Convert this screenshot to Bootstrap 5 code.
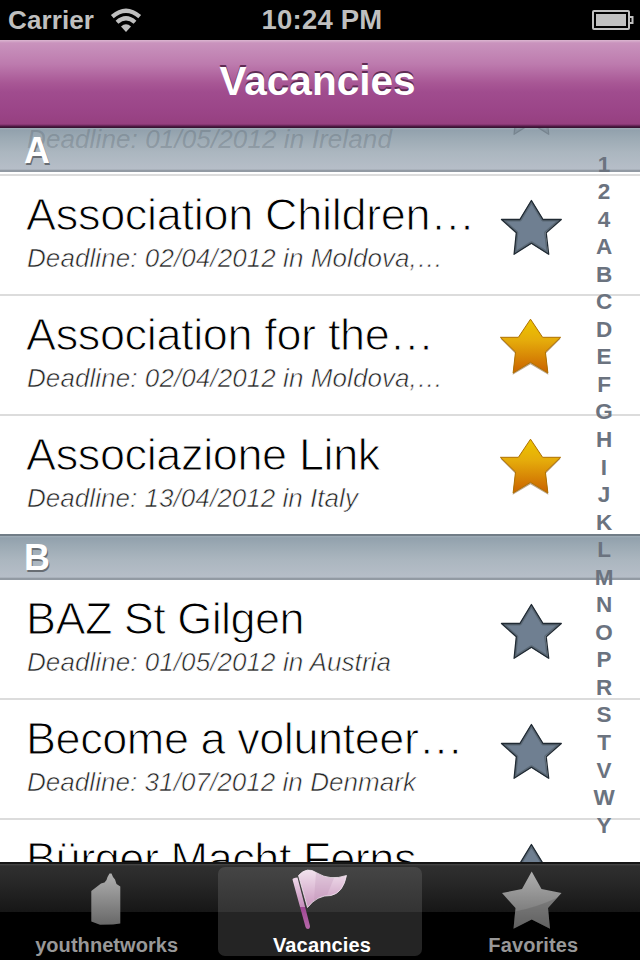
<!DOCTYPE html>
<html lang="en">
<head>
<meta charset="utf-8">
<meta name="viewport" content="width=device-width, initial-scale=1">
<title>Vacancies</title>
<link href="https://cdn.jsdelivr.net/npm/bootstrap@5.3.0/dist/css/bootstrap.min.css" rel="stylesheet">
<style>
body{font-family:"Liberation Sans",Arial,sans-serif;background:#fff}
.phone{width:640px;height:960px}
.status{height:40px;background:#000;color:#bfbfbf;font-size:26px;font-weight:700;line-height:40px}
.status .grow{flex:1 1 0}
.clock{font-size:27.5px}
.titlebar{height:88px;background:linear-gradient(#dbb6d0 0,#c993bd 3px,#bd7bae 24px,#a85795 43px,#a04c8e 52px,#9b4588 70px,#964080 84px,#7a2f68 85px,#3b1233 87px,#3b1233 88px);color:#fff;z-index:3}
.titlebar h1{font-size:40.5px;font-weight:700;line-height:44px;margin:0 5px 6px 0;text-shadow:0 -2px 0 #5f2c54}
.listing{height:734px;z-index:1}
.section-head{height:46px;padding-left:24px;color:#fff;font-size:36px;font-weight:700;line-height:46px;
 background:linear-gradient(#717d87 0,#717d87 1.5px,#a1afb9 2px,#92a1ad 4px,#9caab4 12px,#abb6bf 26px,#b6bec8 43px,#929aa3 44.5px,#929aa3 46px);text-shadow:1px 2px 0 #686d73}
.section-head>span{display:block;padding-top:1px}
.pinned{margin-top:-2px;margin-bottom:2px}
.pinned>span{padding-top:2px}
.ghost{left:27px;top:0;height:44px;color:rgba(75,86,96,.27);font-size:26px;line-height:26px;font-style:italic;text-shadow:none;font-weight:400}
.entry{height:120px;padding:14px 0 0 26px;border-bottom:2px solid #dcdcdc}
.entry.last{height:118px;border-bottom:0}
.rule{height:2px;background:#dcdcdc}
.star{width:66px;height:64px;left:498px;top:18px}
.star.ghost-star{top:-52px;opacity:.25}
.name{font-size:45px;line-height:50px;height:48px;color:#000;-webkit-text-stroke:1px #fff;overflow:hidden}
.when{font-size:26px;line-height:30px;margin:5px 0 0 1px;font-style:italic;color:#222;-webkit-text-stroke:.6px #fff}
.fit{white-space:nowrap}
.fit>span{display:inline-block}
.letters{right:16px;top:22.5px;width:40px;z-index:2;color:#6b737f;font-size:22.5px;font-weight:700;line-height:27.55px}
.tabs{height:98px;z-index:3;background:linear-gradient(#161616 0,#161616 2px,#484848 2px,#2f2f2f 4px,#282828 20px,#161616 50px,#000 50px,#000 98px);color:#989898;font-size:20px;font-weight:700}
.tab{flex:1 1 0;padding-top:5px}
.tab .face{height:89px;width:204px;border-radius:7px;line-height:22px}
.tab svg{display:block;width:80px;height:68px;flex:none;margin-bottom:-1px}
.tab.current{color:#fff}
.tab.current .face{background:linear-gradient(#454545 0,#333 45px,#242424 45px,#242424 100%)}
</style>
<script src="https://cdn.jsdelivr.net/npm/bootstrap@5.3.0/dist/js/bootstrap.bundle.min.js"></script>
</head>
<body>
<svg width="0" height="0" class="position-absolute">
 <defs>
  <linearGradient id="gold" x1="0" y1="0" x2="0" y2="1"><stop offset="0" stop-color="#edc500"/><stop offset=".4" stop-color="#e5ab0b"/><stop offset="1" stop-color="#ca6200"/></linearGradient>
  <linearGradient id="silver" x1="0" y1="0" x2="0" y2="1"><stop offset="0" stop-color="#b0b0b0"/><stop offset="1" stop-color="#686868"/></linearGradient>
  <linearGradient id="pink" x1="0" y1="0" x2="0" y2="1"><stop offset="0" stop-color="#f2e2ee"/><stop offset="1" stop-color="#c997be"/></linearGradient>
  <linearGradient id="pole" x1="0" y1="0" x2="0" y2="1"><stop offset="0" stop-color="#efd9ea"/><stop offset=".57" stop-color="#c68fbc"/><stop offset=".58" stop-color="#a14895"/><stop offset="1" stop-color="#b568a9"/></linearGradient>
  <clipPath id="star-edge"><path d="M33.400 6 45.400 25.600H62.700L47.300 38.500 50 60.300 33.400 49.800 16 60.300 18.300 38.500 4 25.600H21.600Z"/></clipPath>
  <symbol id="star-off" viewBox="0 0 66 64">
   <g fill="#6f7f91" stroke-linejoin="round"><path d="M33.400 6.500 45 25.500H63.300L48.200 38.800 50.700 60.300 33.400 49.300 16.100 60.300 18.300 38.800 3.500 25.500H21.900Z" stroke="#5a6875" stroke-width="4" clip-path="url(#star-edge)"/>
   <path d="M33.400 6.500 45 25.500H63.300L48.200 38.800 50.700 60.300 33.400 49.300 16.100 60.300 18.300 38.800 3.500 25.500H21.900Z" fill="none" stroke="#202a33" stroke-width="1.3"/></g>
  </symbol>
  <symbol id="star-on" viewBox="0 0 66 64">
   <path d="M32.500 6.300 44.600 24.600H62.800L47.700 39.400 50.300 60.700 32.500 50.200 14.700 60.700 17.300 39.400 2.200 24.600H20.400Z" fill="#a58763" opacity=".75"/>
   <path d="M32.500 5.200 44.600 23.300H62.600L47.400 38 49.900 59 32.500 48.300 15.100 59 17.500 38 2.400 23.300H20.400Z" fill="url(#gold)" stroke="#af7100" stroke-width="1" stroke-linejoin="round"/>
  </symbol>
 </defs>
</svg>
<div class="phone d-flex flex-column overflow-hidden position-relative">
 <header class="status d-flex align-items-center">
  <div class="grow d-flex align-items-center ps-2"><span class="fit" data-w="86"><span>Carrier</span></span>
   <svg class="ms-3" width="34" height="26" viewBox="0 0 34 26"><g fill="none" stroke="#bfbfbf" stroke-width="4.200"><path d="M2.300 9.700Q16 -2.300 29.700 9.700"/><path d="M7 15.300Q16 7.300 25 15.300"/></g><path d="M11 19.500Q16 15 21 19.500L16 25Z" fill="#bfbfbf"/></svg></div>
  <span class="clock fit" data-w="121"><span>10:24 PM</span></span>
  <div class="grow d-flex justify-content-end pe-1"><svg width="44" height="22" viewBox="0 0 44 22"><g fill="none" stroke="#c0c0c0" stroke-width="2"><rect x="1" y="2" width="36" height="18" rx="1"/><path d="M38 8H40.500V14H38"/></g><path d="M4 5H34V17H4Z" fill="#c0c0c0"/></svg></div>
 </header>
 <nav class="titlebar d-flex align-items-center justify-content-center position-relative"><h1 class="fit" data-w="196"><span>Vacancies</span></h1></nav>
 <main class="listing position-relative overflow-hidden">
  <div class="section-head pinned position-relative overflow-hidden"><div class="ghost position-absolute fit" data-w="365"><span>Deadline: 01/05/2012 in Ireland</span></div><svg class="star ghost-star position-absolute"><use href="#star-off"/></svg><span class="position-relative">A</span></div>
  <div class="rule"></div>
  <article class="entry position-relative"><div class="name fit" data-w="449"><span>Association Children…</span></div><div class="when fit" data-w="416"><span>Deadline: 02/04/2012 in Moldova,…</span></div><svg class="star position-absolute"><use href="#star-off"/></svg></article>
  <article class="entry position-relative"><div class="name fit" data-w="408"><span>Association for the…</span></div><div class="when fit" data-w="416"><span>Deadline: 02/04/2012 in Moldova,…</span></div><svg class="star position-absolute"><use href="#star-on"/></svg></article>
  <article class="entry position-relative last"><div class="name fit" data-w="354"><span>Associazione Link</span></div><div class="when fit" data-w="331"><span>Deadline: 13/04/2012 in Italy</span></div><svg class="star position-absolute"><use href="#star-on"/></svg></article>
  <div class="section-head"><span>B</span></div>
  <article class="entry position-relative"><div class="name fit" data-w="278"><span>BAZ St Gilgen</span></div><div class="when fit" data-w="364"><span>Deadline: 01/05/2012 in Austria</span></div><svg class="star position-absolute"><use href="#star-off"/></svg></article>
  <article class="entry position-relative"><div class="name fit" data-w="437"><span>Become a volunteer…</span></div><div class="when fit" data-w="389"><span>Deadline: 31/07/2012 in Denmark</span></div><svg class="star position-absolute"><use href="#star-off"/></svg></article>
  <article class="entry position-relative"><div class="name fit" data-w="390"><span>Bürger Macht Ferns</span></div><svg class="star position-absolute"><use href="#star-off"/></svg></article>
  <div class="letters position-absolute text-center"><div>1</div><div>2</div><div>4</div><div>A</div><div>B</div><div>C</div><div>D</div><div>E</div><div>F</div><div>G</div><div>H</div><div>I</div><div>J</div><div>K</div><div>L</div><div>M</div><div>N</div><div>O</div><div>P</div><div>R</div><div>S</div><div>T</div><div>V</div><div>W</div><div>Y</div></div>
 </main>
 <footer class="tabs d-flex position-relative">
  <div class="tab d-flex justify-content-center"><div class="face d-flex flex-column align-items-center">
   <svg viewBox="0 0 80 68"><path d="M24.300 24 34 16.500 37.500 15.500 39.500 13 40.500 10 42.500 6.500H44.500L46 10 48 12.500 49.500 17 53.300 19.500V56.500L46 57.500 33 57.700 24.300 54.500Z" fill="url(#silver)"/></svg><span class="fit" data-w="143"><span>youthnetworks</span></span></div></div>
  <div class="tab current d-flex justify-content-center"><div class="face d-flex flex-column align-items-center">
   <svg viewBox="0 0 80 68"><path d="M12.500 12.500Q12.500 11 17.500 10.500L30 59Q30 62 28 62Q26 62 25.500 60Z" fill="url(#pole)"/><path d="M18.500 8.500Q27 -1 37 6Q50 14 66.500 8.500Q63 26 51 28.500Q37 28 27.500 40.500Z" fill="url(#pink)" stroke="#f5e8f2" stroke-width=".8"/><path d="M36 5.500 37 6Q46 11.500 54 11L47 28.200Q39 29.500 34 33.500Z" fill="#bb8fb5" opacity=".28"/></svg><span class="fit ps-1" data-w="98"><span>Vacancies</span></span></div></div>
  <div class="tab d-flex justify-content-center"><div class="face d-flex flex-column align-items-center">
   <svg viewBox="0 0 80 68"><path d="M38.700 4.500 48.500 22 68.500 26 55 41 57 61.800 38.700 52.500 20.500 61.800 22.500 41 9 26 29 22Z" fill="url(#silver)"/><path d="M64.500 30.500 55 41 57 61.800 38.700 52.500 20.500 61.800 22 44.500Q45 40 64.500 30.500Z" fill="#505050" opacity=".3"/></svg><span class="fit" data-w="90"><span>Favorites</span></span></div></div>
 </footer>
</div>
<script>
// Track each label so that its line has the width given in data-w.
document.querySelectorAll('.fit').forEach(function(el){
  var s=el.firstElementChild,n=Array.from(s.textContent).length;
  s.style.letterSpacing=((el.dataset.w-s.getBoundingClientRect().width)/n)+'px';
});
</script>
</body>
</html>
